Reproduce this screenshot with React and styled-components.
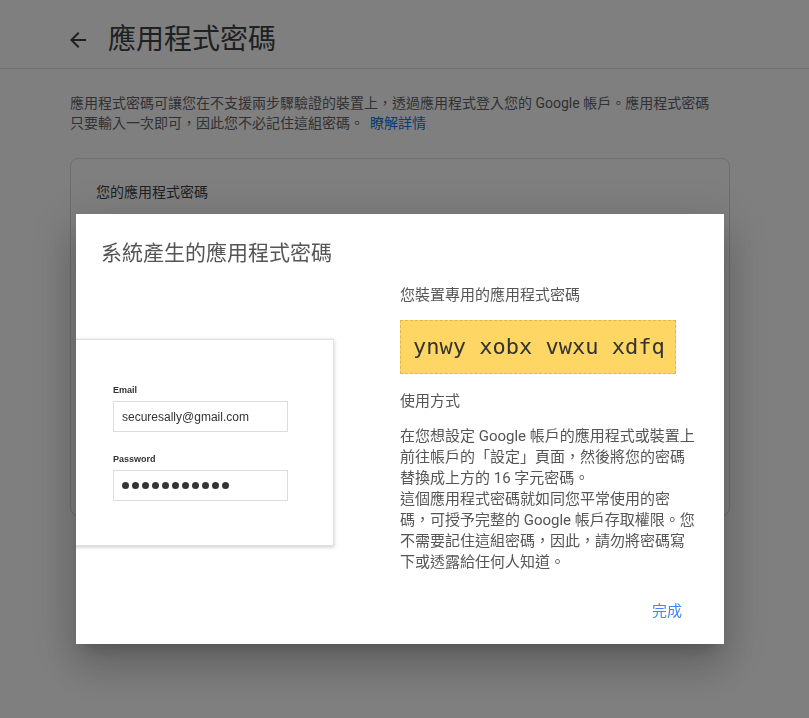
import React from "react";
import styled, { createGlobalStyle } from "styled-components";

const GlobalStyle = createGlobalStyle`
  body {
    margin: 0;
    background: #fff;
    font-family: Roboto, "Noto Sans CJK TC", sans-serif;
  }
`;

const BackArrow = () => (
  <svg width="24" height="24" viewBox="0 0 24 24" fill="#3c4043">
    <path d="M20 11H7.83l5.59-5.59L12 4l-8 8 8 8 1.41-1.41L7.83 13H20v-2z" />
  </svg>
);

const App = () => {
  return (
    <Page>
      <GlobalStyle />
      <Header>
        <BackArrow />
        <PageTitle>應用程式密碼</PageTitle>
      </Header>
      <Content>
        <Intro>
          應用程式密碼可讓您在不支援兩步驟驗證的裝置上，透過應用程式登入您的 Google
          帳戶。應用程式密碼只要輸入一次即可，因此您不必記住這組密碼。
          <LearnMore href="#">瞭解詳情</LearnMore>
        </Intro>
        <Card>
          <CardTitle>您的應用程式密碼</CardTitle>
        </Card>
      </Content>

      <Overlay>
        <Dialog>
          <DialogTitle>系統產生的應用程式密碼</DialogTitle>
          <DialogBody>
            <Illustration>
              <FieldLabel>Email</FieldLabel>
              <FakeInput>securesally@gmail.com</FakeInput>
              <FieldLabel $gap>Password</FieldLabel>
              <FakeInput>
                {Array.from({ length: 11 }).map((_, i) => (
                  <Dot key={i} />
                ))}
              </FakeInput>
            </Illustration>
            <Info>
              <InfoLabel>您裝置專用的應用程式密碼</InfoLabel>
              <PasswordBox>ynwy xobx vwxu xdfq</PasswordBox>
              <InfoHeading>使用方式</InfoHeading>
              <InfoText>
                在您想設定 Google 帳戶的應用程式或裝置上前往帳戶的「設定」頁面，然後將您的密碼替換成上方的 16 字元密碼。
                <br />
                這個應用程式密碼就如同您平常使用的密碼，可授予完整的 Google 帳戶存取權限。您不需要記住這組密碼，因此，請勿將密碼寫下或透露給任何人知道。
              </InfoText>
            </Info>
          </DialogBody>
          <DialogFooter>
            <TextButton>完成</TextButton>
          </DialogFooter>
        </Dialog>
      </Overlay>
    </Page>
  );
};

export default App;

const Page = styled.div`
  position: relative;
  min-height: 718px;
`;

const Header = styled.header`
  height: 56px;
  padding: 12px 0 0 66px;
  border-bottom: 1px solid #dadce0;
  display: flex;
  align-items: center;
  gap: 18px;
`;

const PageTitle = styled.h1`
  margin: 0;
  font-size: 28px;
  font-weight: 400;
  line-height: 36px;
  color: #3c4043;
`;

const Content = styled.main`
  padding: 0 79px 0 70px;
`;

const Intro = styled.p`
  margin: 24px 0 0;
  max-width: 650px;
  font-size: 14px;
  line-height: 20px;
  color: #5f6368;
`;

const LearnMore = styled.a`
  margin-left: 6px;
  color: #1a73e8;
  text-decoration: none;
`;

const Card = styled.section`
  margin-top: 25px;
  height: 358px;
  box-sizing: border-box;
  border: 1px solid #dadce0;
  border-radius: 8px;
  padding: 23px 25px 0;
`;

const CardTitle = styled.div`
  font-size: 14px;
  line-height: 20px;
  color: #3c4043;
`;

const Overlay = styled.div`
  position: fixed;
  inset: 0;
  background: rgba(0, 0, 0, 0.5);
`;

const Dialog = styled.div`
  position: absolute;
  left: 76px;
  top: 214px;
  width: 648px;
  height: 430px;
  background: #fff;
  overflow: hidden;
  display: flex;
  flex-direction: column;
  box-shadow: 0 24px 38px 3px rgba(0, 0, 0, 0.14),
    0 9px 46px 8px rgba(0, 0, 0, 0.12), 0 11px 15px -7px rgba(0, 0, 0, 0.2);
`;

const DialogTitle = styled.h2`
  margin: 0;
  padding: 25px 25px 0;
  font-size: 21px;
  font-weight: 400;
  line-height: 28px;
  color: #555;
`;

const DialogBody = styled.div`
  display: flex;
  gap: 66px;
`;

const Illustration = styled.div`
  margin: 72px 0 0 -2px;
  width: 260px;
  height: 207px;
  box-sizing: border-box;
  padding: 44px 0 0 38px;
  background: #fff;
  border: 1px solid #e0e0e0;
  box-shadow: 0 1px 4px rgba(0, 0, 0, 0.22);
  font-family: "Liberation Sans", Arial, sans-serif;
`;

const FieldLabel = styled.div`
  margin-top: ${(p) => (p.$gap ? "21px" : "0")};
  font-size: 9px;
  font-weight: 700;
  line-height: 12px;
  color: #333;
`;

const FakeInput = styled.div`
  margin-top: 5px;
  width: 175px;
  height: 31px;
  box-sizing: border-box;
  border: 1px solid #dcdcdc;
  padding: 0 8px;
  display: flex;
  align-items: center;
  gap: 3px;
  font-size: 12px;
  color: #333;
`;

const Dot = styled.span`
  width: 7px;
  height: 7px;
  border-radius: 50%;
  background: #333;
`;

const Info = styled.div`
  width: 298px;
  padding-top: 18px;
`;

const InfoLabel = styled.div`
  font-size: 15px;
  line-height: 21px;
  color: #555;
`;

const PasswordBox = styled.div`
  margin-top: 14px;
  display: inline-block;
  height: 52px;
  padding: 0 10px 0 12px;
  background: #fdd663;
  border: 1px dashed #e3b64c;
  font-family: "DejaVu Sans Mono", monospace;
  font-size: 22px;
  line-height: 52px;
  color: #333;
`;

const InfoHeading = styled.div`
  margin-top: 17px;
  font-size: 15px;
  line-height: 21px;
  color: #555;
`;

const InfoText = styled.p`
  margin: 14px 0 0;
  font-size: 15px;
  line-height: 21px;
  color: #555;
`;

const DialogFooter = styled.div`
  margin-top: auto;
  padding: 0 34px 15px 0;
  display: flex;
  justify-content: flex-end;
`;

const TextButton = styled.button`
  border: none;
  background: none;
  padding: 8px;
  font-family: inherit;
  font-size: 15px;
  line-height: 20px;
  color: #4285f4;
  cursor: pointer;
`;
